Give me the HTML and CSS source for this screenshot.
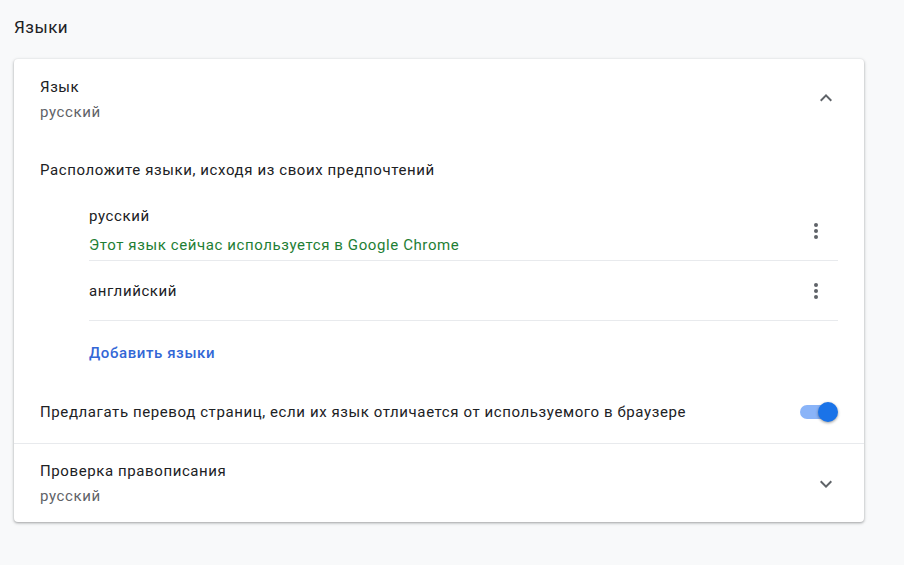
FILE: index.html
```html
<!DOCTYPE html>
<html lang="ru">
<head>
<meta charset="utf-8">
<link rel="stylesheet" href="styles.css">
</head>
<body>
<h2 class="page-title">Языки</h2>
<div class="card">
  <div class="row-two expand-row">
    <div class="texts">
      <div class="primary">Язык</div>
      <div class="secondary">русский</div>
    </div>
    <button class="icon-btn" aria-label="collapse">
      <svg width="24" height="24" viewBox="0 0 24 24"><path d="M7.41 15.41L12 10.83l4.59 4.58L18 14l-6-6-6 6z" fill="#5f6368"/></svg>
    </button>
  </div>
  <div class="expanded">
    <div class="lead">Расположите языки, исходя из своих предпочтений</div>
    <div class="lang-list">
      <div class="lang-row first">
        <div class="texts">
          <div class="primary">русский</div>
          <div class="active-note">Этот язык сейчас используется в Google Chrome</div>
        </div>
        <span class="dots"><i></i><i></i><i></i></span>
      </div>
      <div class="lang-row">
        <div class="primary">английский</div>
        <span class="dots"><i></i><i></i><i></i></span>
      </div>
      <div class="add-link">Добавить языки</div>
    </div>
    <div class="toggle-row">
      <div class="primary">Предлагать перевод страниц, если их язык отличается от используемого в браузере</div>
      <span class="toggle"><span class="track"></span><span class="knob"></span></span>
    </div>
  </div>
  <div class="row-two spell-row">
    <div class="texts">
      <div class="primary">Проверка правописания</div>
      <div class="secondary">русский</div>
    </div>
    <button class="icon-btn" aria-label="expand">
      <svg width="24" height="24" viewBox="0 0 24 24"><path d="M7.41 8.59L12 13.17l4.59-4.58L18 10l-6 6-6-6z" fill="#5f6368"/></svg>
    </button>
  </div>
</div>
</body>
</html>
```
FILE: styles.css
```css
* { box-sizing: border-box; }
html, body { margin: 0; padding: 0; }
body {
  background: #f8f9fa;
  font-family: Roboto, "Liberation Sans", Arial, sans-serif;
  font-size: 15px;
  letter-spacing: 0.6px;
  color: #202124;
  padding: 0 40px 0 14px;
  width: 904px;
  height: 565px;
  overflow: hidden;
}
.page-title {
  margin: 0;
  padding-top: 16px;
  height: 59px;
  font-size: 17px;
  font-weight: 400;
  letter-spacing: 0.5px;
  line-height: 22px;
  color: #202124;
}
.card {
  width: 850px;
  background: #fff;
  border-radius: 4px;
  box-shadow: 0 1px 2px 0 rgba(60,64,67,.3), 0 1px 3px 1px rgba(60,64,67,.15);
}
.primary { line-height: 20px; color: #202124; }
.secondary { line-height: 20px; color: #5f6368; margin-top: 5px; }
.row-two {
  display: flex;
  align-items: center;
  justify-content: space-between;
  padding: 0 20px 0 26px;
}
.expand-row { padding-top: 18px; padding-bottom: 0; }
.icon-btn {
  width: 36px;
  height: 36px;
  border: 0;
  background: none;
  padding: 0;
  display: flex;
  align-items: center;
  justify-content: center;
}
.expand-row .icon-btn { margin-top: -4px; }
.expanded { padding: 0 26px; }
.lead { margin-top: 38px; line-height: 20px; }
.lang-list { padding-left: 49px; }
.lang-row {
  display: flex;
  align-items: center;
  justify-content: space-between;
  height: 60px;
  border-bottom: 1px solid #e8eaed;
}
.lang-row.first { margin-top: 21px; }
.active-note { color: #1e7e34; line-height: 20px; margin-top: 9px; }
.dots {
  width: 20px;
  margin-right: 12px;
  display: flex;
  flex-direction: column;
  align-items: center;
  gap: 2px;
}
.dots i {
  display: block;
  width: 4px;
  height: 4px;
  border-radius: 50%;
  background: #5f6368;
}
.add-link {
  color: #3367d6;
  font-weight: 500;
  line-height: 20px;
  margin-top: 22px;
}
.toggle-row {
  display: flex;
  align-items: center;
  justify-content: space-between;
  padding-top: 18px;
  height: 80px;
}
.toggle {
  position: relative;
  width: 38px;
  height: 20px;
  display: block;
}
.track {
  position: absolute;
  left: 0;
  top: 3px;
  width: 34px;
  height: 14px;
  border-radius: 7px;
  background: #8ab4f8;
}
.knob {
  position: absolute;
  right: 0;
  top: 0;
  width: 20px;
  height: 20px;
  border-radius: 50%;
  background: #1a73e8;
  box-shadow: 0 1px 3px rgba(0,0,0,.4);
}
.spell-row {
  border-top: 1px solid #e8eaed;
  padding-top: 17px;
  padding-bottom: 16px;
}
```
